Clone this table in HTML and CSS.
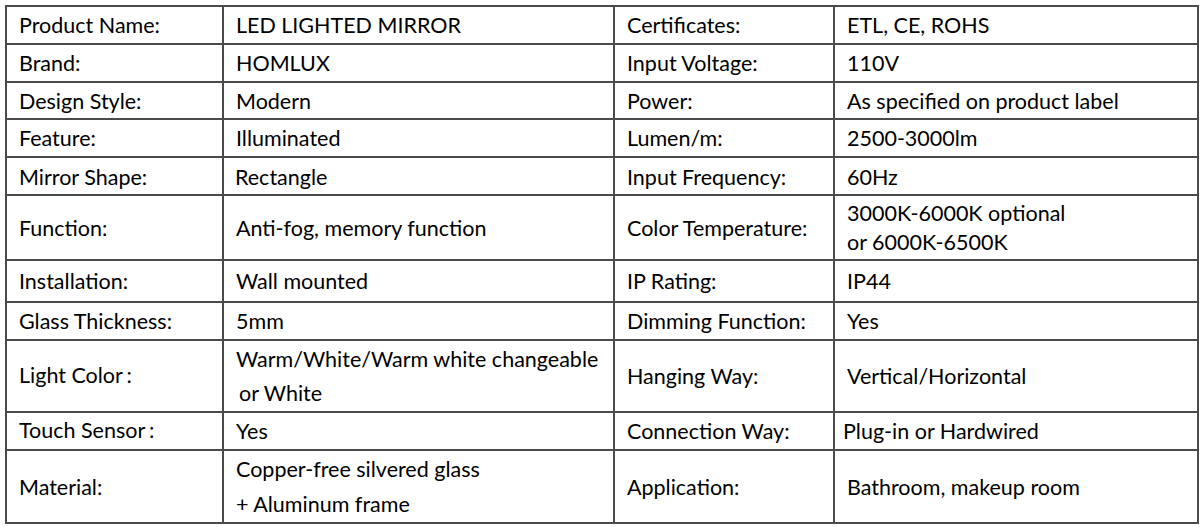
FILE: index.html
```html
<!DOCTYPE html>
<html>
<head>
<meta charset="utf-8">
<link rel="stylesheet" href="styles.css">
</head>
<body>
<table class="spec">
  <colgroup>
    <col class="c1"><col class="c2"><col class="c3"><col class="c4">
  </colgroup>
  <tr class="h38"><td>Product Name:</td><td>LED LIGHTED MIRROR</td><td>Certificates:</td><td>ETL, CE, ROHS</td></tr>
  <tr class="h38"><td>Brand:</td><td>HOMLUX</td><td>Input Voltage:</td><td>110V</td></tr>
  <tr class="h37"><td>Design Style:</td><td>Modern</td><td>Power:</td><td>As specified on product label</td></tr>
  <tr class="h38"><td>Feature:</td><td>Illuminated</td><td>Lumen/m:</td><td>2500-3000lm</td></tr>
  <tr class="h38 low"><td>Mirror Shape:</td><td class="tight">Rectangle</td><td>Input Frequency:</td><td>60Hz</td></tr>
  <tr class="h65"><td>Function:</td><td>Anti-fog, memory function</td><td>Color Temperature:</td><td class="lh29">3000K-6000K optional<br>or 6000K-6500K</td></tr>
  <tr class="h42"><td>Installation:</td><td>Wall mounted</td><td>IP Rating:</td><td>IP44</td></tr>
  <tr class="h38"><td>Glass Thickness:</td><td>5mm</td><td>Dimming Function:</td><td>Yes</td></tr>
  <tr class="h72"><td>Light Color<span class="thin"> </span>:</td><td class="lh34">Warm/White/Warm white changeable<br><span class="indent">or White</span></td><td>Hanging Way:</td><td>Vertical/Horizontal</td></tr>
  <tr class="h38"><td>Touch Sensor<span class="thin"> </span>:</td><td>Yes</td><td>Connection Way:</td><td class="tighter">Plug-in or Hardwired</td></tr>
  <tr class="h73"><td>Material:</td><td class="lh35">Copper-free silvered glass<br>+ Aluminum frame</td><td>Application:</td><td>Bathroom, makeup room</td></tr>
</table>
</body>
</html>
```

FILE: styles.css
```css
html, body {
  background: #ffffff;
}
body {
  margin: 5px 0 0 5px;
  font-family: Lato, "Open Sans", "Liberation Sans", sans-serif;
  font-size: 21.5px;
  color: #000000;
}
.spec {
  border-collapse: collapse;
  table-layout: fixed;
  width: 1192px;
}
.c1 { width: 217px; }
.c2 { width: 391px; }
.c3 { width: 220px; }
.c4 { width: 364px; }
.spec td {
  border: 2px solid #4a4a4a;
  padding: 0 0 0 12px;
  vertical-align: middle;
  line-height: 24px;
  white-space: nowrap;
}
.h37 { height: 37px; }
.h38 { height: 38px; }
.h42 { height: 42px; }
.h65 { height: 65px; }
.h72 { height: 72px; }
.h73 { height: 73px; }
.spec td.lh29 { line-height: 29px; }
.spec td.lh34 { line-height: 34px; }
.spec td.lh35 { line-height: 35px; }
.spec .low td { padding-top: 2px; }
.spec td.tight { padding-left: 11px; }
.spec td.tighter { padding-left: 8px; }
.indent { padding-left: 3px; }
.thin { font-size: 14px; }
```
